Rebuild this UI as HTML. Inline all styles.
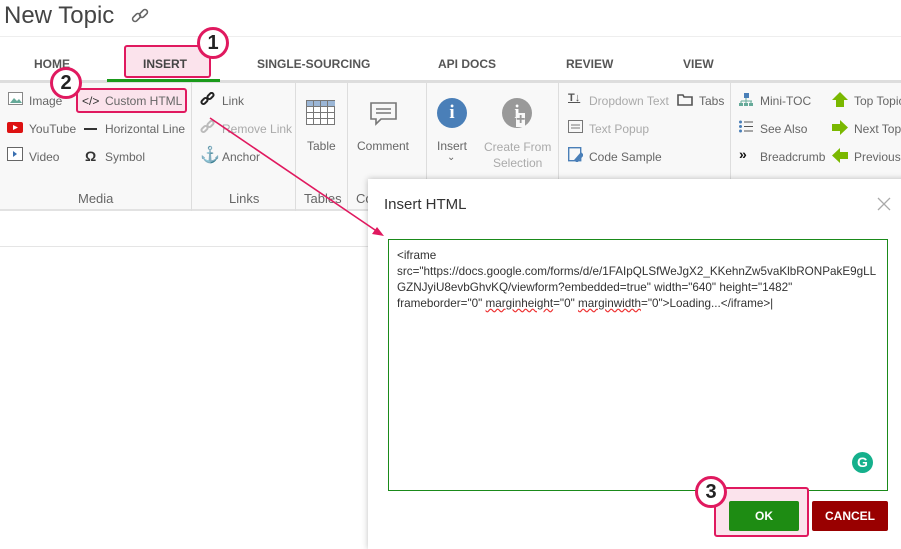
<!DOCTYPE html>
<html><head><meta charset="utf-8"><style>
*{margin:0;padding:0;box-sizing:border-box}
body{width:901px;height:540px;overflow:hidden;background:#fff;font-family:"Liberation Sans",sans-serif;position:relative;color:#555}
.a{position:absolute;white-space:nowrap}
.tab{position:absolute;top:57px;font-size:12px;font-weight:bold;color:#555}
.rb{font-size:12px;color:#666}
.dis{color:#aaa}
.div{position:absolute;top:83px;height:128px;width:1px;background:#ddd}
.circ{position:absolute;width:32px;height:32px;border:3px solid #e0195f;border-radius:50%;background:#fff;font-size:20px;font-weight:bold;color:#222;text-align:center;line-height:26px}
</style></head><body>
<div class="a" style="left:4px;top:2px;font-size:24px;color:#444">New Topic</div>
<svg class="a" style="left:130px;top:6px" width="20" height="20" viewBox="0 0 20 20" fill="none" stroke="#666" stroke-width="1.6"><rect x="2" y="9" width="9" height="5" rx="2.5" transform="rotate(-45 6.5 11.5)"/><rect x="9" y="5" width="9" height="5" rx="2.5" transform="rotate(-45 13.5 7.5)"/></svg>
<div class="a" style="left:0;top:36px;width:901px;height:1px;background:#eee"></div>
<div class="a" style="left:124px;top:45px;width:87px;height:33px;background:#fbe3ec;border:2px solid #e0195f;border-radius:3px"></div>
<div class="tab" style="left:34px">HOME</div>
<div class="tab" style="left:143px;color:#444">INSERT</div>
<div class="tab" style="left:257px">SINGLE-SOURCING</div>
<div class="tab" style="left:438px">API DOCS</div>
<div class="tab" style="left:566px">REVIEW</div>
<div class="tab" style="left:683px">VIEW</div>
<div class="a" style="left:0;top:80px;width:901px;height:131px;background:#f8f8f8;border-top:3px solid #ddd;border-bottom:2px solid #e2e2e2"></div>
<div class="a" style="left:107px;top:79px;width:113px;height:3px;background:#1a9a1a"></div>
<div class="div" style="left:191px"></div><div class="div" style="left:295px"></div><div class="div" style="left:347px"></div><div class="div" style="left:426px"></div><div class="div" style="left:558px"></div><div class="div" style="left:730px"></div>
<div class="a" style="left:76px;top:88px;width:111px;height:25px;background:#fbe3ec;border:2px solid #e0195f;border-radius:3px"></div>
<svg class="a" style="left:8px;top:92px" width="15" height="13"><rect x=".5" y=".5" width="14" height="12" fill="#fff" stroke="#888"/><path d="M2 11l4-5 3 3 2-2 3 4z" fill="#6a9"/></svg>
<div class="a rb" style="left:29px;top:94px">Image</div>
<div class="a rb" style="left:82px;top:94px;color:#333">&lt;/&gt;</div>
<div class="a rb" style="left:105px;top:94px">Custom HTML</div>
<svg class="a" style="left:7px;top:122px" width="16" height="11"><rect width="16" height="11" rx="2" fill="#d11"/><path d="M6 3l5 2.5-5 2.5z" fill="#fff"/></svg>
<div class="a rb" style="left:29px;top:122px">YouTube</div>
<div class="a" style="left:84px;top:128px;width:13px;height:2px;background:#333"></div>
<div class="a rb" style="left:105px;top:122px">Horizontal Line</div>
<svg class="a" style="left:7px;top:147px" width="16" height="14"><rect x=".5" y=".5" width="15" height="13" fill="#fff" stroke="#666"/><path d="M6 4l4 3-4 3z" fill="#3a6fb0"/></svg>
<div class="a rb" style="left:29px;top:150px">Video</div>
<div class="a" style="left:85px;top:148px;font-size:14px;font-weight:bold;color:#333">Ω</div>
<div class="a rb" style="left:105px;top:150px">Symbol</div>
<div class="a rb" style="left:78px;top:191px;font-size:13px">Media</div>
<svg class="a" style="left:200px;top:92px" width="16" height="14" fill="none" stroke="#222" stroke-width="2"><rect x="1" y="7" width="7" height="4" rx="2" transform="rotate(-45 4.5 9)"/><rect x="7" y="2" width="7" height="4" rx="2" transform="rotate(-45 10.5 4)"/></svg>
<div class="a rb" style="left:222px;top:94px">Link</div>
<svg class="a" style="left:200px;top:120px" width="16" height="14" fill="none" stroke="#bbb" stroke-width="2"><rect x="1" y="7" width="7" height="4" rx="2" transform="rotate(-45 4.5 9)"/><rect x="7" y="2" width="7" height="4" rx="2" transform="rotate(-45 10.5 4)"/></svg>
<div class="a rb dis" style="left:222px;top:122px">Remove Link</div>
<div class="a" style="left:200px;top:145px;font-size:16px;color:#888">⚓</div>
<div class="a rb" style="left:222px;top:150px">Anchor</div>
<div class="a rb" style="left:229px;top:191px;font-size:13px">Links</div>
<svg class="a" style="left:306px;top:100px" width="30" height="26"><rect x=".5" y=".5" width="28" height="24" fill="#fff" stroke="#777"/><rect x="1" y="1" width="28" height="5" fill="#9bb6d6"/><path d="M7.5 1v24M14.5 1v24M21.5 1v24M1 6.5h28M1 12.5h28M1 18.5h28" stroke="#777"/></svg>
<div class="a rb" style="left:307px;top:139px">Table</div>
<div class="a rb" style="left:304px;top:191px;font-size:13px">Tables</div>
<svg class="a" style="left:369px;top:101px" width="30" height="26" fill="none" stroke="#777" stroke-width="1.6"><path d="M2 2h25v16H12l-5 5v-5H2z"/><path d="M7 8h15M7 12h15"/></svg>
<div class="a rb" style="left:357px;top:139px">Comment</div>
<div class="a rb" style="left:356px;top:191px;font-size:13px">Co</div>
<div class="a" style="left:437px;top:98px;width:30px;height:30px;border-radius:50%;background:#4a7fb8;color:#fff;font-weight:bold;font-size:19px;text-align:center;line-height:30px;font-family:'Liberation Serif',serif">i</div>
<div class="a rb" style="left:437px;top:139px;font-size:12px">Insert</div>
<div class="a" style="left:447px;top:152px;font-size:10px;color:#666">⌄</div>
<div class="a" style="left:502px;top:98px;width:30px;height:30px;border-radius:50%;background:#999;color:#fff;font-weight:bold;font-size:19px;text-align:center;line-height:30px;font-family:'Liberation Serif',serif">i</div>
<div class="a" style="left:516px;top:113px;font-size:16px;font-weight:bold;color:#999;background:#f8f8f8;line-height:14px">+</div>
<div class="a rb dis" style="left:484px;top:139px;text-align:center;line-height:16px">Create From<br>Selection</div>
<div class="a" style="left:568px;top:92px;font-size:11px;font-weight:bold;color:#555;text-decoration:underline">T↓</div>
<div class="a rb dis" style="left:589px;top:94px">Dropdown Text</div>
<svg class="a" style="left:677px;top:93px" width="16" height="13" fill="none" stroke="#555" stroke-width="1.6"><path d="M1 2h5l1 2h8v8H1z"/></svg>
<div class="a rb" style="left:699px;top:94px">Tabs</div>
<svg class="a" style="left:568px;top:120px" width="15" height="13" fill="none" stroke="#777"><rect x=".5" y=".5" width="14" height="12"/><path d="M3 5h9M3 8h9"/></svg>
<div class="a rb dis" style="left:589px;top:122px">Text Popup</div>
<svg class="a" style="left:568px;top:147px" width="15" height="15" fill="none" stroke="#4a7fb8" stroke-width="1.4"><rect x=".7" y=".7" width="12" height="13"/><path d="M7 13l6-7 2 2-6 7z" fill="#4a7fb8"/></svg>
<div class="a rb" style="left:589px;top:150px">Code Sample</div>
<svg class="a" style="left:739px;top:93px" width="14" height="13"><rect x="5" y="0" width="5" height="5" fill="#4a7fb8"/><path d="M7 5v3M2 8h11M2 8v2M7 8v2M12 8v2" stroke="#6a9" /><rect x="0" y="10" width="4" height="3" fill="#6a9"/><rect x="5" y="10" width="4" height="3" fill="#6a9"/><rect x="10" y="10" width="4" height="3" fill="#6a9"/></svg>
<div class="a rb" style="left:760px;top:94px">Mini-TOC</div>
<svg class="a" style="left:739px;top:120px" width="14" height="13"><g fill="#4a7fb8"><circle cx="1.5" cy="2" r="1.5"/><circle cx="1.5" cy="6.5" r="1.5"/><circle cx="1.5" cy="11" r="1.5"/></g><path d="M5 2h9M5 6.5h9M5 11h9" stroke="#555"/></svg>
<div class="a rb" style="left:760px;top:122px">See Also</div>
<div class="a" style="left:739px;top:146px;font-size:14px;font-weight:bold;color:#111">»</div>
<div class="a rb" style="left:760px;top:150px">Breadcrumb</div>
<svg class="a" style="left:832px;top:92px" width="16" height="15"><path d="M8 0l8 8h-4v7H4V8H0z" fill="#7ab800"/></svg>
<div class="a rb" style="left:854px;top:94px">Top Topic</div>
<svg class="a" style="left:832px;top:120px" width="16" height="15"><path d="M16 7.5l-8 7.5v-4H0V4h8V0z" fill="#7ab800"/></svg>
<div class="a rb" style="left:854px;top:122px">Next Topic</div>
<svg class="a" style="left:832px;top:148px" width="16" height="15"><path d="M0 7.5l8-7.5v4h8v7H8v4z" fill="#7ab800"/></svg>
<div class="a rb" style="left:854px;top:150px">Previous</div>
<div class="a" style="left:0;top:246px;width:368px;height:1px;background:#e5e5e5"></div>
<div class="a" style="left:368px;top:179px;width:540px;height:370px;background:#fff;box-shadow:0 0 6px rgba(0,0,0,.25)"></div>
<div class="a" style="left:384px;top:196px;font-size:15px;color:#333">Insert HTML</div>
<svg class="a" style="left:877px;top:197px" width="14" height="14" stroke="#aaa" stroke-width="1.3"><path d="M1 1l12 12M13 1L1 13"/></svg>
<div class="a" style="left:388px;top:239px;width:500px;height:252px;border:1px solid #1a8a1a"></div>
<div class="a" style="left:397px;top:248px;font-size:11.7px;color:#333;line-height:16px">&lt;iframe<br>src="https://docs.google.com/forms/d/e/1FAIpQLSfWeJgX2_KKehnZw5vaKlbRONPakE9gLL<br>GZNJyiU8evbGhvKQ/viewform?embedded=true" width="640" height="1482"<br>frameborder="0" <span style="text-decoration:underline wavy #e33">marginheight</span>="0" <span style="text-decoration:underline wavy #e33">marginwidth</span>="0"&gt;Loading...&lt;/iframe&gt;|</div>
<div class="a" style="left:852px;top:452px;width:21px;height:21px;border-radius:50%;background:#15b08c;color:#fff;font-weight:bold;font-size:14px;text-align:center;line-height:21px">G</div>
<div class="a" style="left:714px;top:487px;width:95px;height:50px;background:#fbe3ec;border:2px solid #e0195f;border-radius:3px"></div>
<div class="a" style="left:729px;top:501px;width:70px;height:30px;background:#1e8c13;border-radius:2px;color:#fff;font-weight:bold;font-size:12px;text-align:center;line-height:30px">OK</div>
<div class="a" style="left:812px;top:501px;width:76px;height:30px;background:#990000;border-radius:2px;color:#fff;font-weight:bold;font-size:12px;text-align:center;line-height:30px">CANCEL</div>
<svg class="a" style="left:0;top:0" width="901" height="540"><path d="M210 118L378 232" stroke="#e0195f" stroke-width="1.6"/><path d="M384 236l-12-2 5-7z" fill="#e0195f"/></svg>
<div class="circ" style="left:197px;top:27px">1</div>
<div class="circ" style="left:50px;top:67px">2</div>
<div class="circ" style="left:695px;top:476px">3</div>
</body></html>
